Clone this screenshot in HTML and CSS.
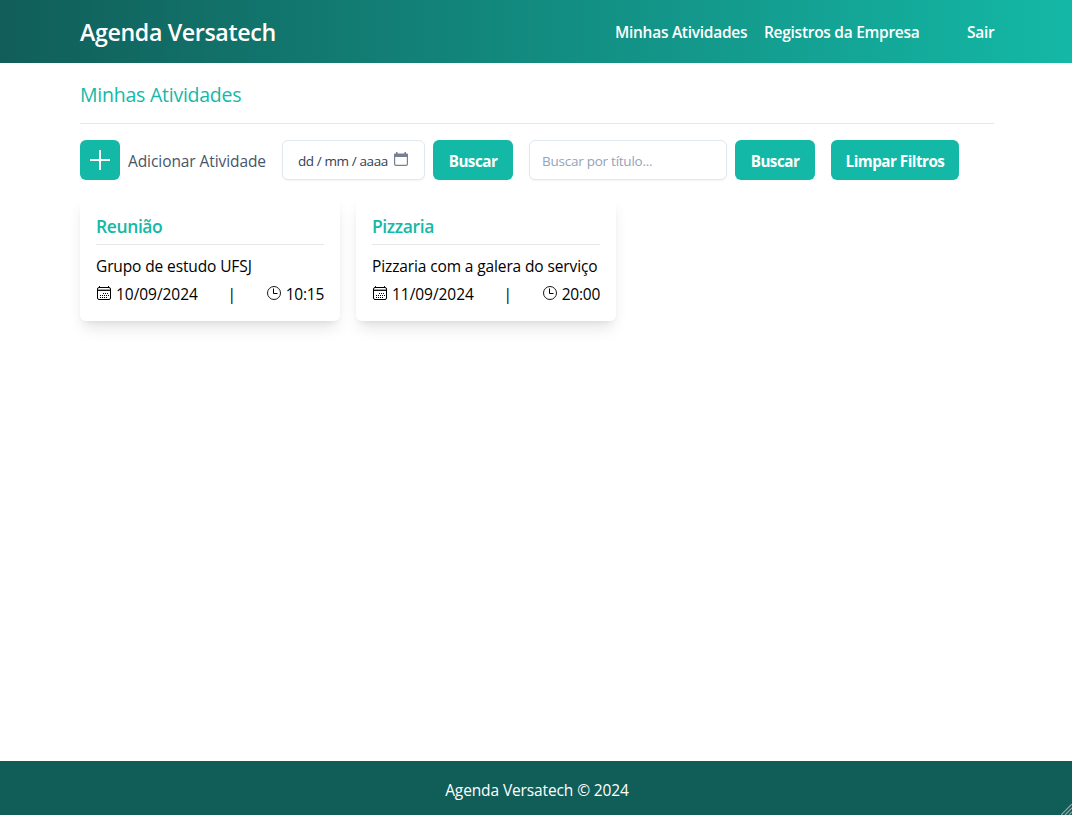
FILE: index.html
```html
<!DOCTYPE html>
<html lang="pt-BR">
<head>
<meta charset="utf-8">
<title>Agenda Versatech</title>
<link rel="stylesheet" href="styles.css">
</head>
<body>
<svg class="sprite" width="0" height="0" aria-hidden="true">
  <symbol id="calendar" viewBox="0 0 16 16">
    <rect x="1.5" y="2.5" width="13" height="12" rx="1.5" fill="none" stroke="currentColor"/>
    <path d="M1.5 4.5h13" stroke="currentColor" opacity=".35"/>
    <path d="M1.5 5.5h13M3.5 1v2M12.5 1v2" fill="none" stroke="currentColor" stroke-width=".9"/>
    <path d="M7 8.5h1M9 8.5h1M11 8.5h1M4 10.5h1M6 10.5h1M8 10.5h1M10 10.5h1M12 10.5h1M4 12.5h1M6 12.5h1M8 12.5h1M10 12.5h1" fill="none" stroke="currentColor"/>
  </symbol>
  <symbol id="clock" viewBox="0 0 16 16">
    <circle cx="8" cy="8" r="6.5" fill="none" stroke="currentColor" stroke-width=".9"/>
    <path d="M7.5 3.5v5h4" fill="none" stroke="currentColor"/>
  </symbol>
</svg>
<header class="header">
  <h1 class="brand">Agenda Versatech</h1>
  <nav class="nav">
    <a class="link-activities">Minhas Atividades</a>
    <a class="link-records">Registros da Empresa</a>
    <a class="link-exit">Sair</a>
  </nav>
</header>
<main class="main">
  <h2 class="page-title">Minhas Atividades</h2>
  <div class="toolbar">
    <button class="button add" aria-label="Adicionar"><svg width="20" height="20" viewBox="0 0 20 20"><path d="M10 0v20M0 10h20" stroke="#fff" stroke-width="2"/></svg></button>
    <span class="add-label">Adicionar Atividade</span>
    <div class="field date-field">
      <span class="date-text">dd / mm / aaaa</span>
      <svg class="picker" width="14" height="14" viewBox="0 0 14 14"><rect x=".6" y="2.6" width="12.8" height="10.8" rx="1.4" fill="none" stroke="#758190" stroke-width="1.2"/><path d="M1 1.5h12a1 1 0 0 1 1 1V5H0V2.5a1 1 0 0 1 1-1zM2 0h1.5v2H2zM10.5 0H12v2h-1.5z" fill="#758190"/></svg>
    </div>
    <button class="button search">Buscar</button>
    <input class="field title-field" type="text" placeholder="Buscar por título...">
    <button class="button search">Buscar</button>
    <button class="button clear">Limpar Filtros</button>
  </div>
  <section class="cards">
    <article class="card">
      <h3 class="card-title">Reunião</h3>
      <p class="card-text">Grupo de estudo UFSJ</p>
      <div class="meta">
        <span class="date"><svg class="icon"><use href="#calendar"/></svg>10/09/2024</span>
        <span class="bar">|</span>
        <span class="time"><svg class="icon"><use href="#clock"/></svg>10:15</span>
      </div>
    </article>
    <article class="card">
      <h3 class="card-title">Pizzaria</h3>
      <p class="card-text">Pizzaria com a galera do serviço</p>
      <div class="meta">
        <span class="date"><svg class="icon"><use href="#calendar"/></svg>11/09/2024</span>
        <span class="bar">|</span>
        <span class="time"><svg class="icon"><use href="#clock"/></svg>20:00</span>
      </div>
    </article>
  </section>
</main>
<footer class="footer">
  <span>Agenda Versatech © 2024</span>
  <svg class="grip" width="11" height="11" viewBox="0 0 11 11"><path d="M0 11L11 0M4 11l7-7M8 11l3-3" stroke="#a3a3a3" stroke-width="1.2"/></svg>
</footer>
</body>
</html>
```
FILE: styles.css
```css
* { box-sizing: border-box; margin: 0; padding: 0; }
body {
  display: flex;
  flex-direction: column;
  height: 815px;
  overflow: hidden;
  background: #fff;
  color: #000;
  font: 15.5px/24px "Segoe UI", "Open Sans", "Noto Sans", sans-serif;
  letter-spacing: -0.12px;
  white-space: nowrap;
}
.sprite { position: absolute; }
.header {
  display: flex;
  flex: none;
  align-items: center;
  justify-content: space-between;
  height: 63px;
  padding: 0 78px 0 80px;
  background: linear-gradient(to right, #115e59, #14b8a6);
  color: #fff;
}
.brand { font-size: 23.2px; font-weight: 600; line-height: 32px; letter-spacing: -0.36px; }
.nav { display: flex; font-weight: 600; letter-spacing: -0.28px; }
.link-activities { width: 149px; }
.link-records { width: 203px; }
.link-exit { width: 27px; }
.main { flex: 1; padding: 18px 78px 0 80px; }
.page-title {
  height: 43px;
  border-bottom: 1px solid #e5e7eb;
  color: #14b8a6;
  font-size: 19.5px;
  font-weight: 400;
  line-height: 28px;
  letter-spacing: -0.24px;
}
.toolbar { display: flex; align-items: center; height: 40px; margin-top: 16px; }
.button {
  display: flex;
  flex: none;
  align-items: center;
  justify-content: center;
  height: 40px;
  padding-top: 1px;
  border: 0;
  border-radius: 6px;
  background: #14b8a6;
  color: #fff;
  font: inherit;
  font-size: 15.2px;
  font-weight: 700;
  letter-spacing: -0.5px;
}
.add { width: 40px; padding: 0; }
.add-label { width: 154px; margin-left: 8px; padding-top: 1px; color: #475569; letter-spacing: -0.08px; }
.field {
  flex: none;
  height: 40px;
  border: 1px solid #e2e8f0;
  border-radius: 6px;
  background: #fff;
  box-shadow: 0 1px 2px rgba(0, 0, 0, 0.05);
  font: 13.5px/20px "Segoe UI", "Open Sans", "Noto Sans", sans-serif;
}
.date-field { display: flex; width: 143px; padding: 10px 15px; color: #334155; letter-spacing: -0.4px; }
.date-text { width: 96px; }
.picker { margin-top: 1px; }
.search { width: 80px; margin-left: 8px; }
.title-field { width: 198px; margin-left: 16px; padding: 2px 12px 0; letter-spacing: -0.25px; }
.title-field::placeholder { color: #94a3b8; opacity: 1; }
.clear { width: 128px; margin-left: 16px; }
.cards { display: flex; gap: 16px; margin-top: 16px; }
.card {
  width: 260px;
  height: 125px;
  padding: 16px;
  border-radius: 6px;
  background: #fff;
  box-shadow: 0 10px 15px -3px rgba(0, 0, 0, 0.1), 0 4px 6px -4px rgba(0, 0, 0, 0.1);
}
.card-title {
  height: 33px;
  border-bottom: 1px solid #e5e7eb;
  color: #14b8a6;
  font-size: 17.5px;
  font-weight: 600;
  line-height: 28px;
  letter-spacing: -0.4px;
}
.card-text { margin-top: 9px; }
.meta { display: flex; justify-content: space-between; margin-top: 4px; }
.date, .time { display: flex; }
.date { letter-spacing: -0.05px; }
.time { letter-spacing: -0.25px; }
.icon { width: 16px; height: 16px; margin: 3px 4px 0 0; }
.footer {
  position: relative;
  flex: none;
  height: 54px;
  padding: 17px 0 0 2px;
  background: #115e59;
  color: #fff;
  text-align: center;
}
.grip { position: absolute; right: 0; bottom: 0; }
```
